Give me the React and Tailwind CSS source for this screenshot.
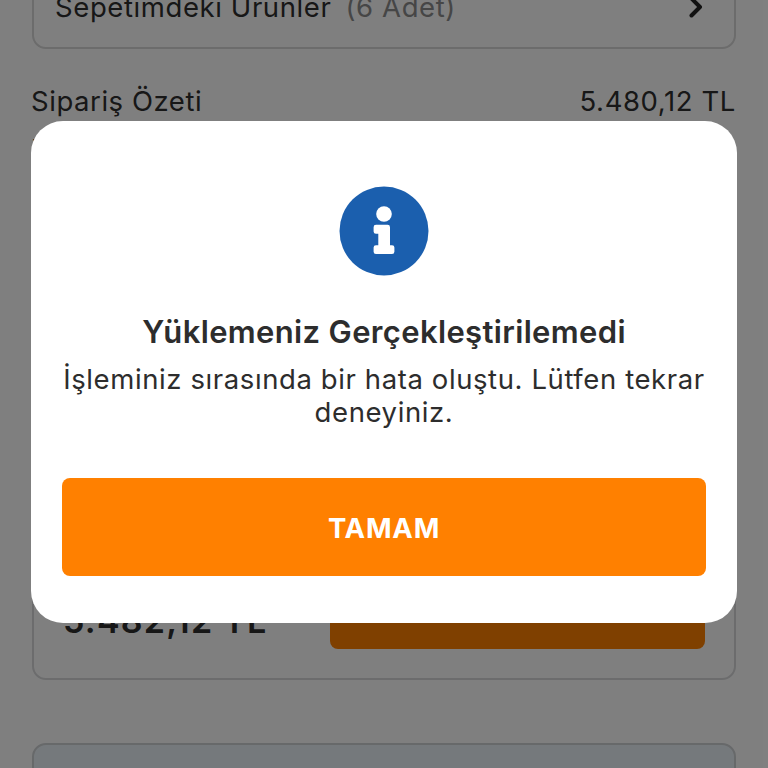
const OrderSummary = () => {
    return (
        <div className="px-8 text-[27.5px] leading-8 text-[#2f2f2f]">
            {/* Cart Items */}
            <div className="-mt-[35px] flex h-[84px] items-center justify-between rounded-[14px] border-2 border-[#d8d8d8] pl-[21px] pr-[30px]">
                <div className="flex items-center gap-[14px]">
                    <span className="tracking-[0.6px]">Sepetimdeki Ürünler</span>
                    <span className="tracking-[0.6px] text-[#8c8c8c]">(6 Adet)</span>
                </div>
                <svg width="16" height="24" viewBox="0 0 16 24" fill="none" stroke="#222" strokeWidth="4" strokeLinecap="round" strokeLinejoin="round">
                    <path d="M3.5 3.5 L12 12 L3.5 20.5" />
                </svg>
            </div>

            {/* Summary */}
            <div className="mt-9 flex justify-between">
                <span className="-ml-px tracking-[0.55px]">Sipariş Özeti</span>
                <span className="tracking-[0.6px]">5.480,12 TL</span>
            </div>
            <div className="mt-4 flex">Toplam</div>

            {/* Total and Pay Button */}
            <div className="mt-[368px] flex h-[147px] items-center justify-between rounded-[14px] border-2 border-[#d8d9db] pl-[29px] pr-[29px]">
                <span className="mt-[28px] text-[34px] font-semibold tracking-[1.25px]">5.482,12 TL</span>
                <div className="h-[84px] w-[375px] rounded-lg bg-[#ff8000]" />
            </div>

            {/* Info Box */}
            <div className="mt-[63px] h-24 rounded-[14px] border-2 border-[#cfd2d5] bg-[#ebf2f8]" />
        </div>
    );
};

const InfoIcon = () => (
    <svg width="90" height="90" viewBox="0 0 90 90">
        <circle cx="45" cy="45" r="44.5" fill="#1b5fae" />
        <circle cx="45" cy="28" r="7.8" fill="#fff" />
        <path
            d="M37 38.8 H48.6 Q51 38.8 51 41.2 V59.2 H53 Q55.4 59.2 55.4 61.6 V65.7 Q55.4 68.1 53 68.1 H37 Q34.6 68.1 34.6 65.7 V61.6 Q34.6 59.2 37 59.2 H39.3 V47.8 H37 Q34.6 47.8 34.6 45.4 V41.2 Q34.6 38.8 37 38.8 Z"
            fill="#fff"
        />
    </svg>
);

const ErrorDialog = () => {
    return (
        <div className="absolute inset-0 flex items-start justify-center bg-black/50 pt-[121px]">
            <div role="dialog" className="flex h-[502px] w-[706px] flex-col items-center rounded-[32px] bg-white px-[31px] pt-[65px] text-[#2d2d2d]">
                <InfoIcon />
                <h2 className="mt-[38px] whitespace-nowrap text-[31px] leading-9 font-semibold tracking-[0.35px]">
                    Yüklemeniz Gerçekleştirilemedi
                </h2>
                <p className="mt-[13px] text-center text-[27.5px] leading-[33px] tracking-[0.6px] whitespace-nowrap">
                    İşleminiz sırasında bir hata oluştu. Lütfen tekrar
                    <br />
                    deneyiniz.
                </p>
                <button className="mt-[49px] h-[98px] w-full shrink-0 rounded-lg bg-[#ff8000] pt-[3px] text-[27.5px] font-bold tracking-[0.8px] text-white">
                    TAMAM
                </button>
            </div>
        </div>
    );
};

export default function App() {
    return (
        <div className="relative flex h-[768px] w-[768px] flex-col overflow-hidden bg-white font-['Inter',sans-serif]">
            <OrderSummary />
            <ErrorDialog />
        </div>
    );
}
